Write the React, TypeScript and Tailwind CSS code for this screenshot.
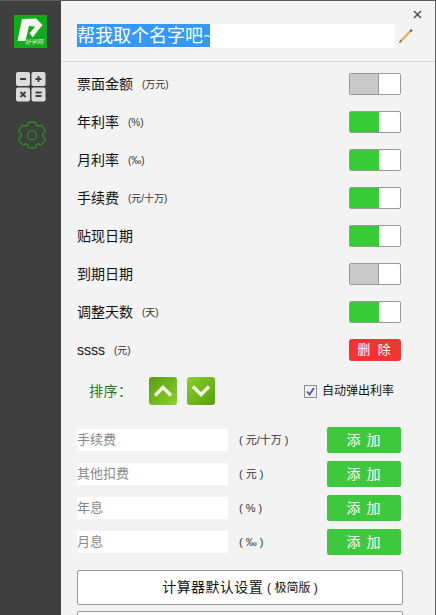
const FONT = '"Liberation Sans", "Noto Sans CJK SC", sans-serif';

const rows: { label: string; unit: string; on: boolean }[] = [
  { label: "票面金额", unit: "(万元)", on: false },
  { label: "年利率", unit: "(%)", on: true },
  { label: "月利率", unit: "(‰)", on: true },
  { label: "手续费", unit: "(元/十万)", on: true },
  { label: "贴现日期", unit: "", on: true },
  { label: "到期日期", unit: "", on: false },
  { label: "调整天数", unit: "(天)", on: true },
];

const addRows = [
  { ph: "手续费", unit: "( 元/十万 )" },
  { ph: "其他扣费", unit: "( 元 )" },
  { ph: "年息", unit: "( % )" },
  { ph: "月息", unit: "( ‰ )" },
];

function Toggle({ on }: { on: boolean }) {
  return (
    <div className="flex h-[22px] w-[52px] overflow-hidden rounded-[2px] border border-[#999999] bg-white">
      <div className={on ? "w-[29px] bg-[#35cc35]" : "w-[29px] border-r border-[#999999] bg-[#c9c9c9]"} />
    </div>
  );
}

function Logo() {
  return (
    <div className="relative h-[33px] w-[33px] bg-[#12ab1c]">
      <svg width="33" height="33" viewBox="0 0 33 33" className="block">
        <path d="M3.5 26 L8 4 L22 3.5 L28.5 10 L18.5 22.5 L15.5 18 L21 11.5 L15 11 L11.5 26 Z" fill="#f4f8f1" />
        <path d="M16 12.5 L20 12.5 L16 17.5 Z" fill="#12ab1c" />
      </svg>
      <span className="absolute right-[4px] bottom-[3px] text-[6px] leading-none whitespace-nowrap text-[#e6f5df] italic">好学网</span>
    </div>
  );
}

function CalcIcon() {
  return (
    <svg width="30" height="30" viewBox="0 0 30 30">
      <rect x="0" y="0" width="14" height="14" rx="2" fill="#dcdcdc" />
      <rect x="15.5" y="0" width="14" height="14" rx="2" fill="#dcdcdc" />
      <rect x="0" y="15.5" width="14" height="14" rx="2" fill="#dcdcdc" />
      <rect x="15.5" y="15.5" width="14" height="14" rx="2" fill="#dcdcdc" />
      <path d="M4 7 H10 M19.5 7 H25.5 M22.5 4 V10 M4.5 20 L9.5 25 M9.5 20 L4.5 25 M19.5 20.5 H25.5 M19.5 24 H25.5" stroke="#3f3f3f" strokeWidth="1.8" fill="none" />
    </svg>
  );
}

function GearIcon() {
  return (
    <svg width="30" height="30" viewBox="0 0 30 30" fill="none" stroke="#25862b" strokeWidth="1.6">
      <path d="M11.5 2.5 Q15 1 18.5 2.5 Q19 6 21 6.3 Q24 4.5 25.5 6.5 Q28 9.5 28.3 11.5 Q25.5 13 25.5 15 Q25.5 17 28.3 18.5 Q28 20.5 25.5 23.5 Q24 25.5 21 23.7 Q19 24 18.5 27.5 Q15 29 11.5 27.5 Q11 24 9 23.7 Q6 25.5 4.5 23.5 Q2 20.5 1.7 18.5 Q4.5 17 4.5 15 Q4.5 13 1.7 11.5 Q2 9.5 4.5 6.5 Q6 4.5 9 6.3 Q11 6 11.5 2.5 Z" strokeLinejoin="round" />
      <circle cx="15" cy="15" r="4.5" />
    </svg>
  );
}

function Pencil() {
  return (
    <svg width="14" height="14" viewBox="0 0 14 14">
      <path d="M1 13 L11.5 2" stroke="#e0b050" strokeWidth="2.2" />
      <path d="M11 2.5 L13 0.8" stroke="#7a5a50" strokeWidth="2" />
      <path d="M0.5 13.5 L2 11.5" stroke="#5a4a40" strokeWidth="1.2" />
    </svg>
  );
}

function SortBtn({ up }: { up: boolean }) {
  return (
    <div className={up ? "flex h-7 w-7 items-center justify-center rounded-[3px] bg-gradient-to-br from-[#559f0a] to-[#8ccf30]" : "flex h-7 w-7 items-center justify-center rounded-[3px] bg-gradient-to-br from-[#8ccf30] to-[#559f0a]"}>
      <svg width="20" height="14" viewBox="0 0 20 14" fill="none" stroke="#f2fae0" strokeWidth="3.4">
        <path d={up ? "M2 11.5 L10 3.5 L18 11.5" : "M2 2.5 L10 10.5 L18 2.5"} />
      </svg>
    </div>
  );
}

export default function App() {
  return (
    <div className="flex h-[615px] w-[436px] overflow-hidden border-t border-r border-[#5c5c5c] bg-[#f3f3f3]" style={{ fontFamily: FONT }}>
      <aside className="flex w-[61px] shrink-0 flex-col items-center bg-[#3f3f3f] pt-[14px]">
        <Logo />
        <div className="mt-[24px]"><CalcIcon /></div>
        <div className="mt-[18px] ml-[2px]"><GearIcon /></div>
      </aside>

      <main className="relative min-w-0 flex-1">
        <button className="absolute top-[9px] right-[13px] text-[#555555]">
          <svg width="9" height="9" viewBox="0 0 9 9" className="block" stroke="#555555" strokeWidth="1.6">
            <path d="M1 1 L8 8 M8 1 L1 8" />
          </svg>
        </button>

        <header className="flex h-[61px] items-start border-b border-[#d9d9d9] pt-[23px] pl-4">
          <div className="flex h-6 w-[318px] items-start bg-white">
            <span className="flex h-[23px] w-[133px] items-center bg-[#3399ff] text-[18px] leading-none whitespace-nowrap text-white">
              帮我取个名字吧<span className="font-['DejaVu_Sans'] text-[13px]">~</span>
            </span>
          </div>
          <div className="mt-[5px] ml-[4px]"><Pencil /></div>
        </header>

        <div className="flex flex-col pt-[3px] pr-[34px] pl-4">
          {rows.map((r) => (
            <div key={r.label} className="flex h-[38px] items-center justify-between">
              <div className="flex items-center gap-[9px]">
                <span className="text-[14px] text-[#111111]">{r.label}</span>
                {r.unit && <span className="text-[10px] text-[#333333]">{r.unit}</span>}
              </div>
              <Toggle on={r.on} />
            </div>
          ))}
          <div className="flex h-[38px] items-center justify-between">
            <div className="flex items-center gap-[9px]">
              <span className="text-[14px] text-[#111111]">ssss</span>
              <span className="text-[10px] text-[#333333]">(元)</span>
            </div>
            <div className="flex h-[22px] w-[52px] items-center justify-center rounded-[3px] bg-[#f43333] text-[13px] tracking-[2px] text-white">删 除</div>
          </div>
        </div>

        <div className="mt-[8px] flex h-7 items-center pr-[41px] pl-[28px]">
          <span className="w-[60px] text-[14px] tracking-[0.5px] text-[#1f7a1f]">排序：</span>
          <SortBtn up />
          <div className="ml-[10px]"><SortBtn up={false} /></div>
          <div className="ml-auto flex items-center gap-[5px]">
            <span className="flex h-[13px] w-[13px] items-center justify-center border border-[#8e8f8f] bg-[#eef0f6]">
              <svg width="9" height="9" viewBox="0 0 9 9" fill="none" stroke="#4a5a9a" strokeWidth="1.8"><path d="M1 4.5 L3.5 7.5 L8 1" /></svg>
            </span>
            <span className="text-[12px] text-[#111111]">自动弹出利率</span>
          </div>
        </div>

        <div className="mt-[22px] flex flex-col gap-2 pr-[34px] pl-4">
          {addRows.map((r) => (
            <div key={r.ph} className="flex h-[26px] items-center">
              <div className="flex h-[22px] w-[151px] items-center bg-white text-[13px] text-[#8a8a8a]">{r.ph}</div>
              <span className="ml-[11px] flex-1 text-[11px] whitespace-nowrap text-[#333333]">{r.unit}</span>
              <div className="flex h-[26px] w-[74px] items-center justify-center rounded-[2px] bg-[#3ec83e] text-[14px] tracking-[1px] text-white">添 加</div>
            </div>
          ))}
        </div>

        <div className="mt-[15px] flex flex-col gap-[6px] pr-[32px] pl-4">
          <div className="flex h-[35px] shrink-0 items-center justify-center rounded-[2px] border border-[#999999] bg-white text-[#111111]">
            <span className="text-[14px] tracking-[0.4px]">计算器默认设置</span>
            <span className="ml-[4px] text-[12px]">( 极简版 )</span>
          </div>
          <div className="h-[35px] shrink-0 rounded-[2px] border border-[#999999] bg-white" />
        </div>
      </main>
    </div>
  );
}
